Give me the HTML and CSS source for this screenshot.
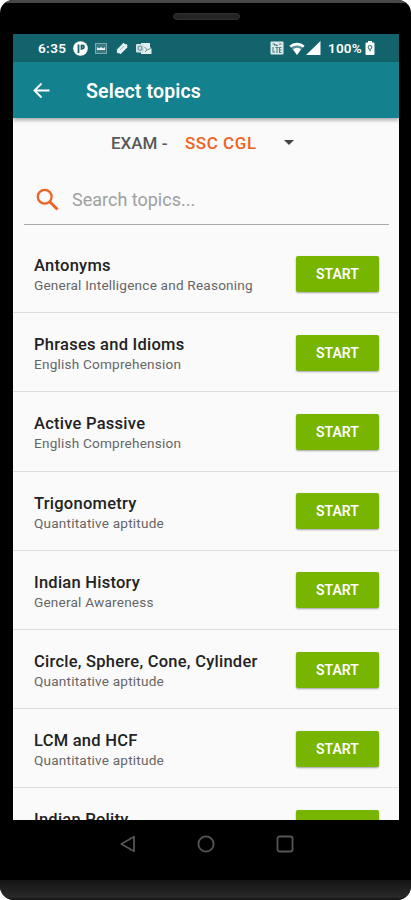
FILE: index.html
```html
<!DOCTYPE html>
<html lang="en">
<head>
<meta charset="utf-8">
<title>Select topics</title>
<link rel="stylesheet" href="styles.css">
</head>
<body>
<div class="phone">
  <div class="top-bezel"><div class="speaker"></div></div>
  <main class="screen">
    <div class="status">
      <span class="clock">6:35</span>
      <svg class="s-app" width="15" height="15" viewBox="0 0 15 15"><circle cx="7.500" cy="7.500" r="7.300" fill="#fff"/><path d="M5.500 12V3.500M8.500 3.800v5M8.500 4.500h1a1.500 1.500 0 0 1 0 3h-1" fill="none" stroke="#17656c" stroke-width="1.800"/></svg>
      <svg class="s-img" width="12" height="11" viewBox="0 0 12 11"><rect x=".5" y=".5" width="11" height="10" fill="#387b81" stroke="#7ba9ad"/><path d="M2 7V4l2 1.500L6 4l2 1.500L10 4v3z" fill="#eef6f6"/></svg>
      <svg class="s-tag" width="12" height="13" viewBox="0 0 12 13"><path d="M.5 8 7.500.8l1.600 1.500 1.200-.4 1.200 1.400-.5 1.300.6.700-7.200 7-1.200-1.200-1.200.3L.7 10l.6-1.200z" fill="#e5f0f0"/><path d="m4 8 4-4" stroke="#9cc0c2" stroke-width="1"/></svg>
      <svg class="s-mail" width="16" height="13" viewBox="0 0 16 13"><path d="M5 1h9v4l1.500 1.500V12H5z" fill="#e5f0f0"/><rect y="2" width="8" height="8.500" rx="1" fill="#d1e3e4"/><circle cx="4" cy="6.200" r="2" fill="none" stroke="#6d9da1" stroke-width="1.200"/><path d="m8.500 5 3 3 3.500-2M9 10l2-2" fill="none" stroke="#5d9195"/></svg>
      <span class="grow"></span>
      <svg class="s-lte" width="14" height="14" viewBox="0 0 14 14"><rect x=".5" y=".5" width="13" height="13" rx="1" fill="#dceaeb"/><path d="M2.500 3h2v1.500M6 3v1.500h2M9 3h2.500M3 6v5h2M5.500 6.500h3M7 6.500V12M11.500 6.500H9.500v5h2M9.500 9h2" fill="none" stroke="#4b7f84" stroke-width="1.100"/></svg>
      <svg class="s-wifi" width="16" height="13" viewBox="0 0 16 13"><path d="M.5 3.500a11.500 11.500 0 0 1 15 0L8 13z" fill="#5c9398"/><path d="M.4 3.700a11.500 11.500 0 0 1 15.200 0L14 5.600a9.300 9.300 0 0 0-12 0zM4 7.200a6.500 6.500 0 0 1 8 0L8 13z" fill="#fff"/></svg>
      <svg class="s-cell" width="15" height="14" viewBox="0 0 15 14"><path d="M14.500 0v14H0z" fill="#fff"/></svg>
      <span class="percent">100%</span>
      <svg class="s-bat" width="10" height="14" viewBox="0 0 10 14"><path d="M3 0h4v1.500h1.500q1 0 1 1V13q0 1-1 1h-7q-1 0-1-1V2.500q0-1 1-1H3z" fill="#fff"/><path d="M5 10.500V8.800C3.700 8 3.200 7.200 3.200 6.300a1.800 1.800 0 0 1 3.600 0C6.800 7.200 6.300 8 5 8.800" fill="none" stroke="#4c868b" stroke-width="1.200"/></svg>
    </div>
    <header class="appbar">
      <svg width="17" height="17" viewBox="0 0 17 17"><path d="M16.500 8.500H2M8.500 1.500l-7 7 7 7" fill="none" stroke="#fff" stroke-width="1.900"/></svg>
      <h1>Select topics</h1>
    </header>
    <div class="exam"><span class="label">EXAM -</span><span class="value">SSC CGL</span><i class="caret"></i></div>
    <div class="search">
      <svg width="23" height="23" viewBox="0 0 23 23"><circle cx="8.700" cy="8.700" r="6.900" fill="none" stroke="#ee6224" stroke-width="2.300"/><path d="m13.500 13.500 8 8" stroke="#ee6224" stroke-width="3"/></svg>
      <span>Search topics...</span>
    </div>
    <section class="topics">
      <div class="row"><div><h2>Antonyms</h2><p>General Intelligence and Reasoning</p></div><button>START</button></div>
      <div class="row"><div><h2>Phrases and Idioms</h2><p>English Comprehension</p></div><button>START</button></div>
      <div class="row"><div><h2>Active Passive</h2><p>English Comprehension</p></div><button>START</button></div>
      <div class="row"><div><h2>Trigonometry</h2><p>Quantitative aptitude</p></div><button>START</button></div>
      <div class="row"><div><h2>Indian History</h2><p>General Awareness</p></div><button>START</button></div>
      <div class="row"><div><h2>Circle, Sphere, Cone, Cylinder</h2><p>Quantitative aptitude</p></div><button>START</button></div>
      <div class="row"><div><h2>LCM and HCF</h2><p>Quantitative aptitude</p></div><button>START</button></div>
      <div class="row"><div><h2>Indian Polity</h2></div><button aria-label="Start"></button></div>
    </section>
  </main>
  <nav class="nav">
    <svg width="17" height="18" viewBox="0 0 17 18"><path d="M15 1.800v14.400L2.300 9z" fill="none" stroke="#555" stroke-width="1.800" stroke-linejoin="round"/></svg>
    <svg width="18" height="18" viewBox="0 0 18 18"><circle cx="9" cy="9" r="7.600" fill="none" stroke="#555" stroke-width="1.800"/></svg>
    <svg width="18" height="18" viewBox="0 0 18 18"><rect x="1.500" y="1.500" width="15" height="15" rx="2" fill="none" stroke="#555" stroke-width="1.800"/></svg>
  </nav>
  <div class="chin"></div>
</div>
</body>
</html>
```
FILE: styles.css
```css
* { box-sizing: border-box; }
body { margin: 0; background: #fff; font-family: Roboto, "Liberation Sans", sans-serif; }
.phone { width: 411px; height: 900px; overflow: hidden; background: #000; border-radius: 13px 13px 14px 14px; display: flex; flex-direction: column; }
.top-bezel { height: 34px; flex: none; border-top: 3px solid #484848; padding-top: 10px; }
.speaker { width: 67px; height: 7px; margin: 0 auto 0 173px; border-radius: 4px; background: #242424; border: 1px solid #303030; }
.screen { margin: 0 12px 0 13px; width: 386px; height: 786px; flex: none; overflow: hidden; background: #fafafa; }
.status { height: 28px; background: #12636b; display: flex; align-items: center; padding: 0 24px 0 25px; color: #fff; font-size: 13.5px; font-weight: 600; }
.status svg { flex: none; }
.clock { width: 35px; letter-spacing: .4px; }
.s-img { margin-left: 7px; }
.s-tag { margin-left: 9px; }
.s-mail { margin-left: 8px; }
.grow { flex: 1; }
.s-wifi { margin-left: 5px; }
.s-cell { margin-left: 1px; }
.percent { width: 34px; margin-left: 7px; letter-spacing: .2px; }
.s-bat { margin-left: 3px; }
.appbar { height: 56px; width: 386px; background: #14818e; display: flex; align-items: center; padding: 1px 0 0 20px; position: relative; box-shadow: 0 2px 4px rgba(0,0,0,.35); }
h1 { margin: 1px 0 0 36px; color: #fff; font-size: 19.5px; font-weight: 600; letter-spacing: .15px; }
.exam { height: 48px; display: flex; align-items: center; padding: 1px 0 0 98px; font-size: 17px; font-weight: 500; color: #585858; }
.exam .label { width: 74px; }
.exam .value { color: #ee6224; width: 99px; letter-spacing: .55px; }
.caret { border: 5px solid transparent; border-top-color: #444; border-bottom: 0; }
.search { height: 59px; margin: 0 10px 0 11px; border-bottom: 1px solid #aaa; display: flex; align-items: center; gap: 13px; padding: 8px 0 0 12px; color: #a0a0a0; font-size: 18px; }
.topics { padding-top: 9px; }
.row { height: 79.2px; border-bottom: 1px solid #dedede; padding: 1px 20px 0 21px; display: flex; justify-content: space-between; align-items: center; }
.row > div { padding-top: 1px; align-self: flex-start; margin-top: 19px; }
h2 { margin: 0; font-size: 16.5px; line-height: 21px; font-weight: 500; color: #222; letter-spacing: .25px; white-space: nowrap; }
p { margin: 0; font-size: 13.6px; line-height: 19px; color: #666; letter-spacing: .2px; white-space: nowrap; }
button { width: 83px; height: 36px; border: 0; border-radius: 2px; padding: 0; background: #78b500; color: #fff; font: 600 14px Roboto, sans-serif; box-shadow: 0 1px 2px rgba(0,0,0,.35); }
.nav { height: 60px; flex: none; display: flex; align-items: flex-start; padding: 15px 0 0 119px; gap: 61px; }
.chin { height: 20px; flex: none; background: linear-gradient(#151515, #292929 85%, #111); }
```
